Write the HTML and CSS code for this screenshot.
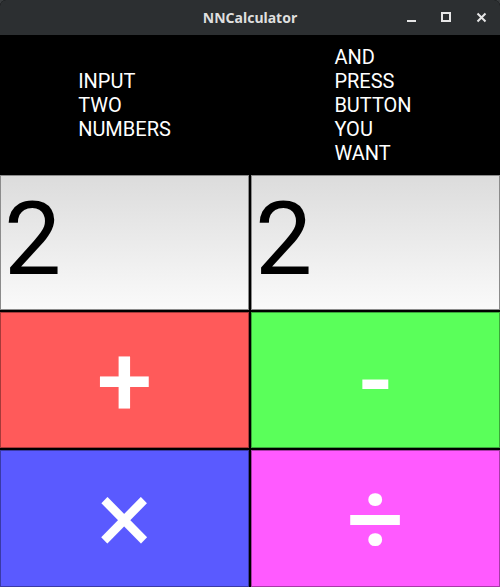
FILE: index.html
```html
<!DOCTYPE html>
<html>
<head>
<meta charset="utf-8">
<link rel="stylesheet" href="styles.css">
</head>
<body>
<div class="window">
  <div class="titlebar">
    <span class="title">NNCalculator</span>
    <div class="controls">
      <svg class="ctl" width="12" height="12" viewBox="0 0 12 12"><rect x="1" y="8" width="9" height="2" fill="#e6e6e6"/></svg>
      <svg class="ctl" width="12" height="12" viewBox="0 0 12 12"><rect x="1" y="1" width="8" height="8" fill="none" stroke="#e6e6e6" stroke-width="2"/></svg>
      <svg class="ctl" width="12" height="12" viewBox="0 0 12 12"><path d="M1.5 1.5 L9.5 9.5 M9.5 1.5 L1.5 9.5" stroke="#e6e6e6" stroke-width="2"/></svg>
    </div>
  </div>
  <div class="content">
    <div class="label"><div class="lines">INPUT<br>TWO<br>NUMBERS</div></div>
    <div class="label right"><div class="lines">AND<br>PRESS<br>BUTTON<br>YOU<br>WANT</div></div>
    <div class="input">2</div>
    <div class="input">2</div>
    <div class="btn red">+</div>
    <div class="btn green">-</div>
    <div class="btn blue">×</div>
    <div class="btn magenta">÷</div>
  </div>
</div>
</body>
</html>
```

FILE: styles.css
```css
html, body {
  margin: 0;
  padding: 0;
  background: #3a3d3f;
}
.window {
  width: 500px;
  height: 587px;
  overflow: hidden;
  border-radius: 6px 6px 0 0;
  background: #000;
}
.titlebar {
  height: 35px;
  background: #2c2f31;
  position: relative;
  display: flex;
  align-items: center;
  justify-content: center;
}
.title {
  font-family: "Noto Sans", "DejaVu Sans", sans-serif;
  font-weight: bold;
  font-size: 14px;
  color: #dfdfdf;
}
.controls {
  position: absolute;
  right: 12px;
  top: 12px;
  display: flex;
  gap: 23px;
}
.ctl {
  display: block;
}
.content {
  height: 552px;
  display: grid;
  grid-template-columns: 249px 249px;
  grid-template-rows: 138px 135px 136px 137px;
  gap: 2px;
  background: #000;
}
.label {
  display: flex;
  align-items: center;
  justify-content: center;
  color: #fff;
  font-family: Roboto, sans-serif;
  font-size: 20px;
}
.label.right {
  padding-right: 5px;
}
.lines {
  text-align: left;
  padding-top: 2px;
}
.input {
  box-sizing: border-box;
  border: 1px solid #8c8c8c;
  background: linear-gradient(#dcdcdc, #fafafa);
  font-family: Roboto, sans-serif;
  font-size: 102px;
  line-height: 1.172;
  color: #000;
  padding: 4px 0 0 3px;
}
.btn {
  display: flex;
  align-items: center;
  justify-content: center;
  color: #fff;
  font-family: Roboto, sans-serif;
  font-weight: 500;
  font-size: 100px;
  box-shadow: inset 0 0 0 1px rgba(0,0,0,0.35);
}
.red { background: #ff5a5a; }
.green { background: #5aff5a; }
.blue { background: #5a5aff; font-weight: 400; font-size: 104px; }
.magenta { background: #ff5aff; }
```
